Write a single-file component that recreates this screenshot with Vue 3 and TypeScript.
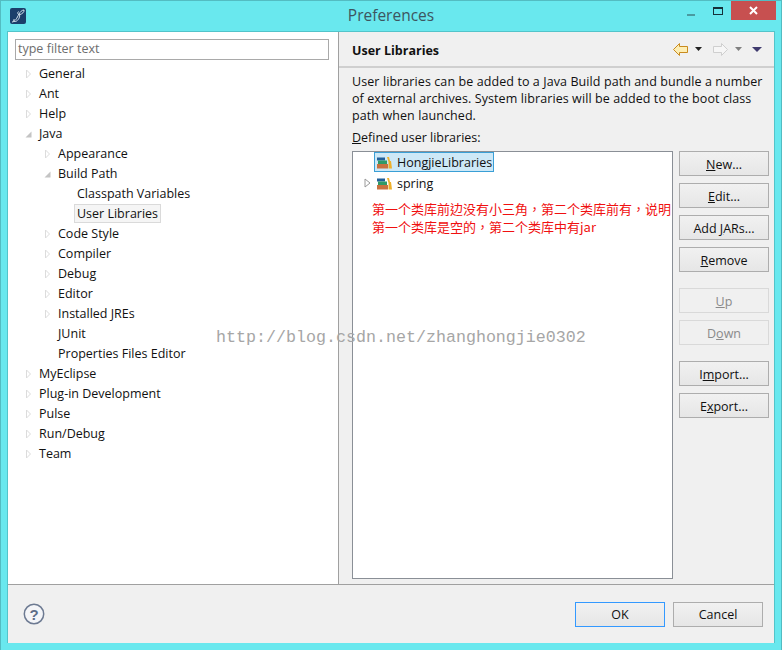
<script setup lang="ts">
interface Node { label: string; depth: number; arrow: 'none' | 'closed' | 'open'; selected?: boolean }
const tree: Node[] = [
  { label: 'General', depth: 0, arrow: 'closed' },
  { label: 'Ant', depth: 0, arrow: 'closed' },
  { label: 'Help', depth: 0, arrow: 'closed' },
  { label: 'Java', depth: 0, arrow: 'open' },
  { label: 'Appearance', depth: 1, arrow: 'closed' },
  { label: 'Build Path', depth: 1, arrow: 'open' },
  { label: 'Classpath Variables', depth: 2, arrow: 'none' },
  { label: 'User Libraries', depth: 2, arrow: 'none', selected: true },
  { label: 'Code Style', depth: 1, arrow: 'closed' },
  { label: 'Compiler', depth: 1, arrow: 'closed' },
  { label: 'Debug', depth: 1, arrow: 'closed' },
  { label: 'Editor', depth: 1, arrow: 'closed' },
  { label: 'Installed JREs', depth: 1, arrow: 'closed' },
  { label: 'JUnit', depth: 1, arrow: 'none' },
  { label: 'Properties Files Editor', depth: 1, arrow: 'none' },
  { label: 'MyEclipse', depth: 0, arrow: 'closed' },
  { label: 'Plug-in Development', depth: 0, arrow: 'closed' },
  { label: 'Pulse', depth: 0, arrow: 'closed' },
  { label: 'Run/Debug', depth: 0, arrow: 'closed' },
  { label: 'Team', depth: 0, arrow: 'closed' },
]
function indent(d: number) { return { paddingLeft: 23 + d * 19 + 'px' } }
function arrowPos(d: number) { return { left: 17 + d * 19 + 'px' } }
</script>

<template>
  <div class="page">
    <div class="window">
      <div class="titlebar">
        <div class="logo">
          <svg width="16" height="16" viewBox="0 0 16 16">
            <rect width="16" height="16" rx="2" fill="#1b3f6b" />
            <path d="M2 14 C5 14 7 10 9 6 C10 4 12 2 14 2 C14.500 4 12 6 10 6.500 C8 7 7 5 8.500 3.500 M9 6.500 C11 8 8 13 5.500 13.500 C3.500 14 3 12 4.500 11" fill="none" stroke="#d8e4ee" stroke-width="1" />
          </svg>
        </div>
        <div class="title">Preferences</div>
        <div class="winbtns">
          <span class="min"></span>
          <span class="max"></span>
          <span class="close">
            <svg width="9" height="9" viewBox="0 0 9 9"><path d="M1 1 L8 8 M8 1 L1 8" stroke="#fff" stroke-width="2" /></svg>
          </span>
        </div>
      </div>
      <div class="client">
        <div class="main">
          <aside class="left">
            <div class="filter">type filter text</div>
            <div class="tree">
              <div v-for="n in tree" :key="n.label" class="row" :style="indent(n.depth)">
                <svg v-if="n.arrow === 'closed'" class="arrow" :style="arrowPos(n.depth)" width="7" height="10" viewBox="0 0 7 10"><path d="M1.500 1 L5.500 5 L1.500 9 Z" fill="#fff" stroke="#dcdcdc" /></svg>
                <svg v-else-if="n.arrow === 'open'" class="arrow" :style="arrowPos(n.depth)" width="7" height="10" viewBox="0 0 7 10"><path d="M0.500 8.500 L6.500 8.500 L6.500 2.500 Z" fill="#c4c4c4" /></svg>
                <span class="label" :class="{ sel: n.selected }">{{ n.label }}</span>
              </div>
            </div>
          </aside>
          <section class="right">
            <header class="head">
              <h2>User Libraries</h2>
              <div class="nav">
                <svg width="15" height="13" viewBox="0 0 15 13"><path d="M0.500 6.500 L6.500 0.500 V3.500 H14.500 V9.500 H6.500 V12.500 Z" fill="#fdeeb4" stroke="#c98b1e" /></svg>
                <svg class="drop" width="7" height="4" viewBox="0 0 7 4"><path d="M0 0 H7 L3.500 4 Z" fill="#222" /></svg>
                <svg class="next" width="15" height="13" viewBox="0 0 15 13"><path d="M14.500 6.500 L8.500 0.500 V3.500 H0.500 V9.500 H8.500 V12.500 Z" fill="#f6f6f6" stroke="#cfcfcf" /></svg>
                <svg class="drop" width="7" height="4" viewBox="0 0 7 4"><path d="M0 0 H7 L3.500 4 Z" fill="#808080" /></svg>
                <svg class="menu" width="10" height="5" viewBox="0 0 10 5"><path d="M0 0 H10 L5 5 Z" fill="#3f3a6e" /></svg>
              </div>
            </header>
            <div class="body">
              <p class="desc">User libraries can be added to a Java Build path and bundle a number<br />of external archives. System libraries will be added to the boot class<br />path when launched.</p>
              <div class="caption"><u>D</u>efined user libraries:</div>
              <div class="content">
                <div class="list">
                  <div class="lib first">
                    <span class="libsel">
                      <svg class="books" width="16" height="13" viewBox="0 0 16 13"><rect x="1" y="1.500" width="8" height="3" fill="#22609a" /><rect x="2" y="4.500" width="9" height="3.500" fill="#2f9a68" /><rect x="1" y="8" width="11" height="4.500" fill="#c9713f" /><path d="M11 1 L13 1 L14 5 L15 5 L16 12.500 L12.500 12.500 L12.500 6 Z" fill="#eeb12c" /></svg>
                      HongjieLibraries
                    </span>
                  </div>
                  <div class="lib">
                    <svg class="libarrow" width="7" height="10" viewBox="0 0 7 10"><path d="M1 1 L6 5 L1 9 Z" fill="#fff" stroke="#9a9a9a" /></svg>
                    <span class="libplain">
                      <svg class="books" width="16" height="13" viewBox="0 0 16 13"><rect x="1" y="1.500" width="8" height="3" fill="#22609a" /><rect x="2" y="4.500" width="9" height="3.500" fill="#2f9a68" /><rect x="1" y="8" width="11" height="4.500" fill="#c9713f" /><path d="M11 1 L13 1 L14 5 L15 5 L16 12.500 L12.500 12.500 L12.500 6 Z" fill="#eeb12c" /></svg>
                      spring
                    </span>
                  </div>
                  <div class="note" lang="zh-TW">第一个类库前边没有小三角，第二个类库前有，说明<br />第一个类库是空的，第二个类库中有jar</div>
                </div>
                <div class="buttons">
                  <button class="btn"><u>N</u>ew...</button>
                  <button class="btn"><u>E</u>dit...</button>
                  <button class="btn">Add <u>J</u>ARs...</button>
                  <button class="btn"><u>R</u>emove</button>
                  <button class="btn off gap"><u>U</u>p</button>
                  <button class="btn off">D<u>o</u>wn</button>
                  <button class="btn gap">I<u>m</u>port...</button>
                  <button class="btn">E<u>x</u>port...</button>
                </div>
              </div>
            </div>
          </section>
        </div>
        <footer class="foot">
          <svg width="22" height="22" viewBox="0 0 22 22"><circle cx="11" cy="11" r="9.700" fill="#f4f5f8" stroke="#6d7a92" stroke-width="1.500" /><text x="11" y="16.500" text-anchor="middle" class="q">?</text></svg>
          <div class="actions">
            <button class="btn big def">OK</button>
            <button class="btn big">Cancel</button>
          </div>
        </footer>
      </div>
    </div>
    <div class="mark">http://blog.csdn.net/zhanghongjie0302</div>
  </div>
</template>

<style>
html, body { margin: 0; background: #fff; }
</style>

<style scoped>
.page { position: relative; width: 784px; height: 652px; overflow: hidden; font-family: "Open Sans", "Noto Sans", sans-serif; font-size: 12.500px; color: #111; }
.window { width: 782px; height: 650px; box-sizing: border-box; background: #69e8ee; border: 1px solid #53bcc2; border-bottom: 0; display: flex; flex-direction: column; }
.titlebar { height: 30px; display: flex; align-items: center; position: relative; padding-left: 9px; flex: none; }
.logo { width: 16px; height: 16px; display: flex; margin-top: -1px; }
.title { position: absolute; left: 0; right: 0; text-align: center; top: 3px; font-size: 15.500px; color: #3d5560; }
.winbtns { position: absolute; right: 0; top: 0; display: flex; align-items: flex-start; }
.min { width: 8px; height: 2px; background: #4a9aa0; margin: 13px 18px 0 0; }
.max { width: 8px; height: 5px; border: 1px solid #15313a; border-top-width: 2px; margin: 6px 8px 0 0; }
.close { width: 45px; height: 19px; background: #c75050; display: flex; align-items: center; justify-content: center; margin-right: 5px; }
.client { margin: 0 6px 7px 6px; flex: 1; display: flex; flex-direction: column; background: #f0f0f0; border: 1px solid #53c4ca; border-bottom: 0; min-height: 0; }
.main { flex: 1; display: flex; min-height: 0; border-bottom: 1px solid #a0a0a0; }
.left { width: 330px; background: #fff; border-right: 1px solid #a0a0a0; padding: 7px 0 0 0; flex: none; }
.filter { margin: 0 9px 0 7px; height: 19px; border: 1px solid #a9a9a9; line-height: 18px; padding-left: 2px; color: #6d6d6d; }
.tree { margin-top: 4px; }
.row { position: relative; height: 20px; line-height: 19px; white-space: nowrap; }
.arrow { position: absolute; top: 5px; }
.label { display: inline-block; padding: 0 2px; margin-left: 5px; border: 1px solid transparent; height: 19px; box-sizing: border-box; line-height: 17px; }
.label.sel { background: #f5f5f5; border-color: #dadada; }
.right { flex: 1; min-width: 0; display: flex; flex-direction: column; }
.head { height: 34px; flex: none; display: flex; align-items: center; justify-content: space-between; padding: 0 12px 0 13px; border-bottom: 2px solid #cfcfcf; }
h2 { margin: 2px 0 0; font-size: 12.500px; font-weight: 700; }
.nav { display: flex; align-items: center; }
.drop { margin-left: 7px; }
.next { margin-left: 11px; }
.menu { margin-left: 10px; }
.body { padding: 5px 6px 0 13px; flex: 1; display: flex; flex-direction: column; min-height: 0; }
.desc { margin: 0; line-height: 17px; white-space: nowrap; letter-spacing: 0.090px; }
.caption { margin-top: 5px; line-height: 17px; }
.content { display: flex; flex: 1; min-height: 0; margin-top: 5px; margin-bottom: 5px; }
.list { width: 321px; box-sizing: border-box; border: 1px solid #8a8f96; background: #fff; flex: none; padding-top: 1px; }
.lib { height: 20px; position: relative; padding-left: 21px; display: flex; align-items: center; }
.lib.first { margin-top: -1px; margin-bottom: 1px; }
.libsel { display: inline-flex; align-items: center; height: 20px; box-sizing: border-box; border: 1px solid #3a9fd6; background: #cde8f7; padding: 0 1px; }
.libplain { display: inline-flex; align-items: center; padding: 0 2px; }
.books { margin-right: 5px; }
.libarrow { position: absolute; left: 11px; top: 5px; }
.note { color: #f01010; font-family: "Noto Sans CJK TC", sans-serif; font-size: 13px; line-height: 18px; margin: 7px 0 0 19px; white-space: nowrap; overflow: hidden; }
.buttons { margin-left: 6px; display: flex; flex-direction: column; gap: 7px; }
.btn { box-sizing: border-box; width: 90px; height: 25px; padding: 2px 0 0; border: 1px solid #adadad; background: linear-gradient(#f1f1f1, #e6e6e6); color: #111; font: inherit; line-height: 20px; }
.btn.gap { margin-top: 9px; }
.btn.off { background: #f0f0f0; border-color: #d9d9d9; color: #8a8a8a; }
.foot { height: 58px; flex: none; display: flex; align-items: center; justify-content: space-between; padding: 0 11px 0 15px; }
.actions { display: flex; gap: 8px; }
.btn.def { border-color: #3399ff; }
.q { font: 700 15px "Liberation Sans", sans-serif; fill: #5e6d88; }
.mark { position: absolute; left: 216px; top: 328px; font: 16.670px/20px "Liberation Mono", monospace; color: #a6a6a6; white-space: nowrap; }
</style>
